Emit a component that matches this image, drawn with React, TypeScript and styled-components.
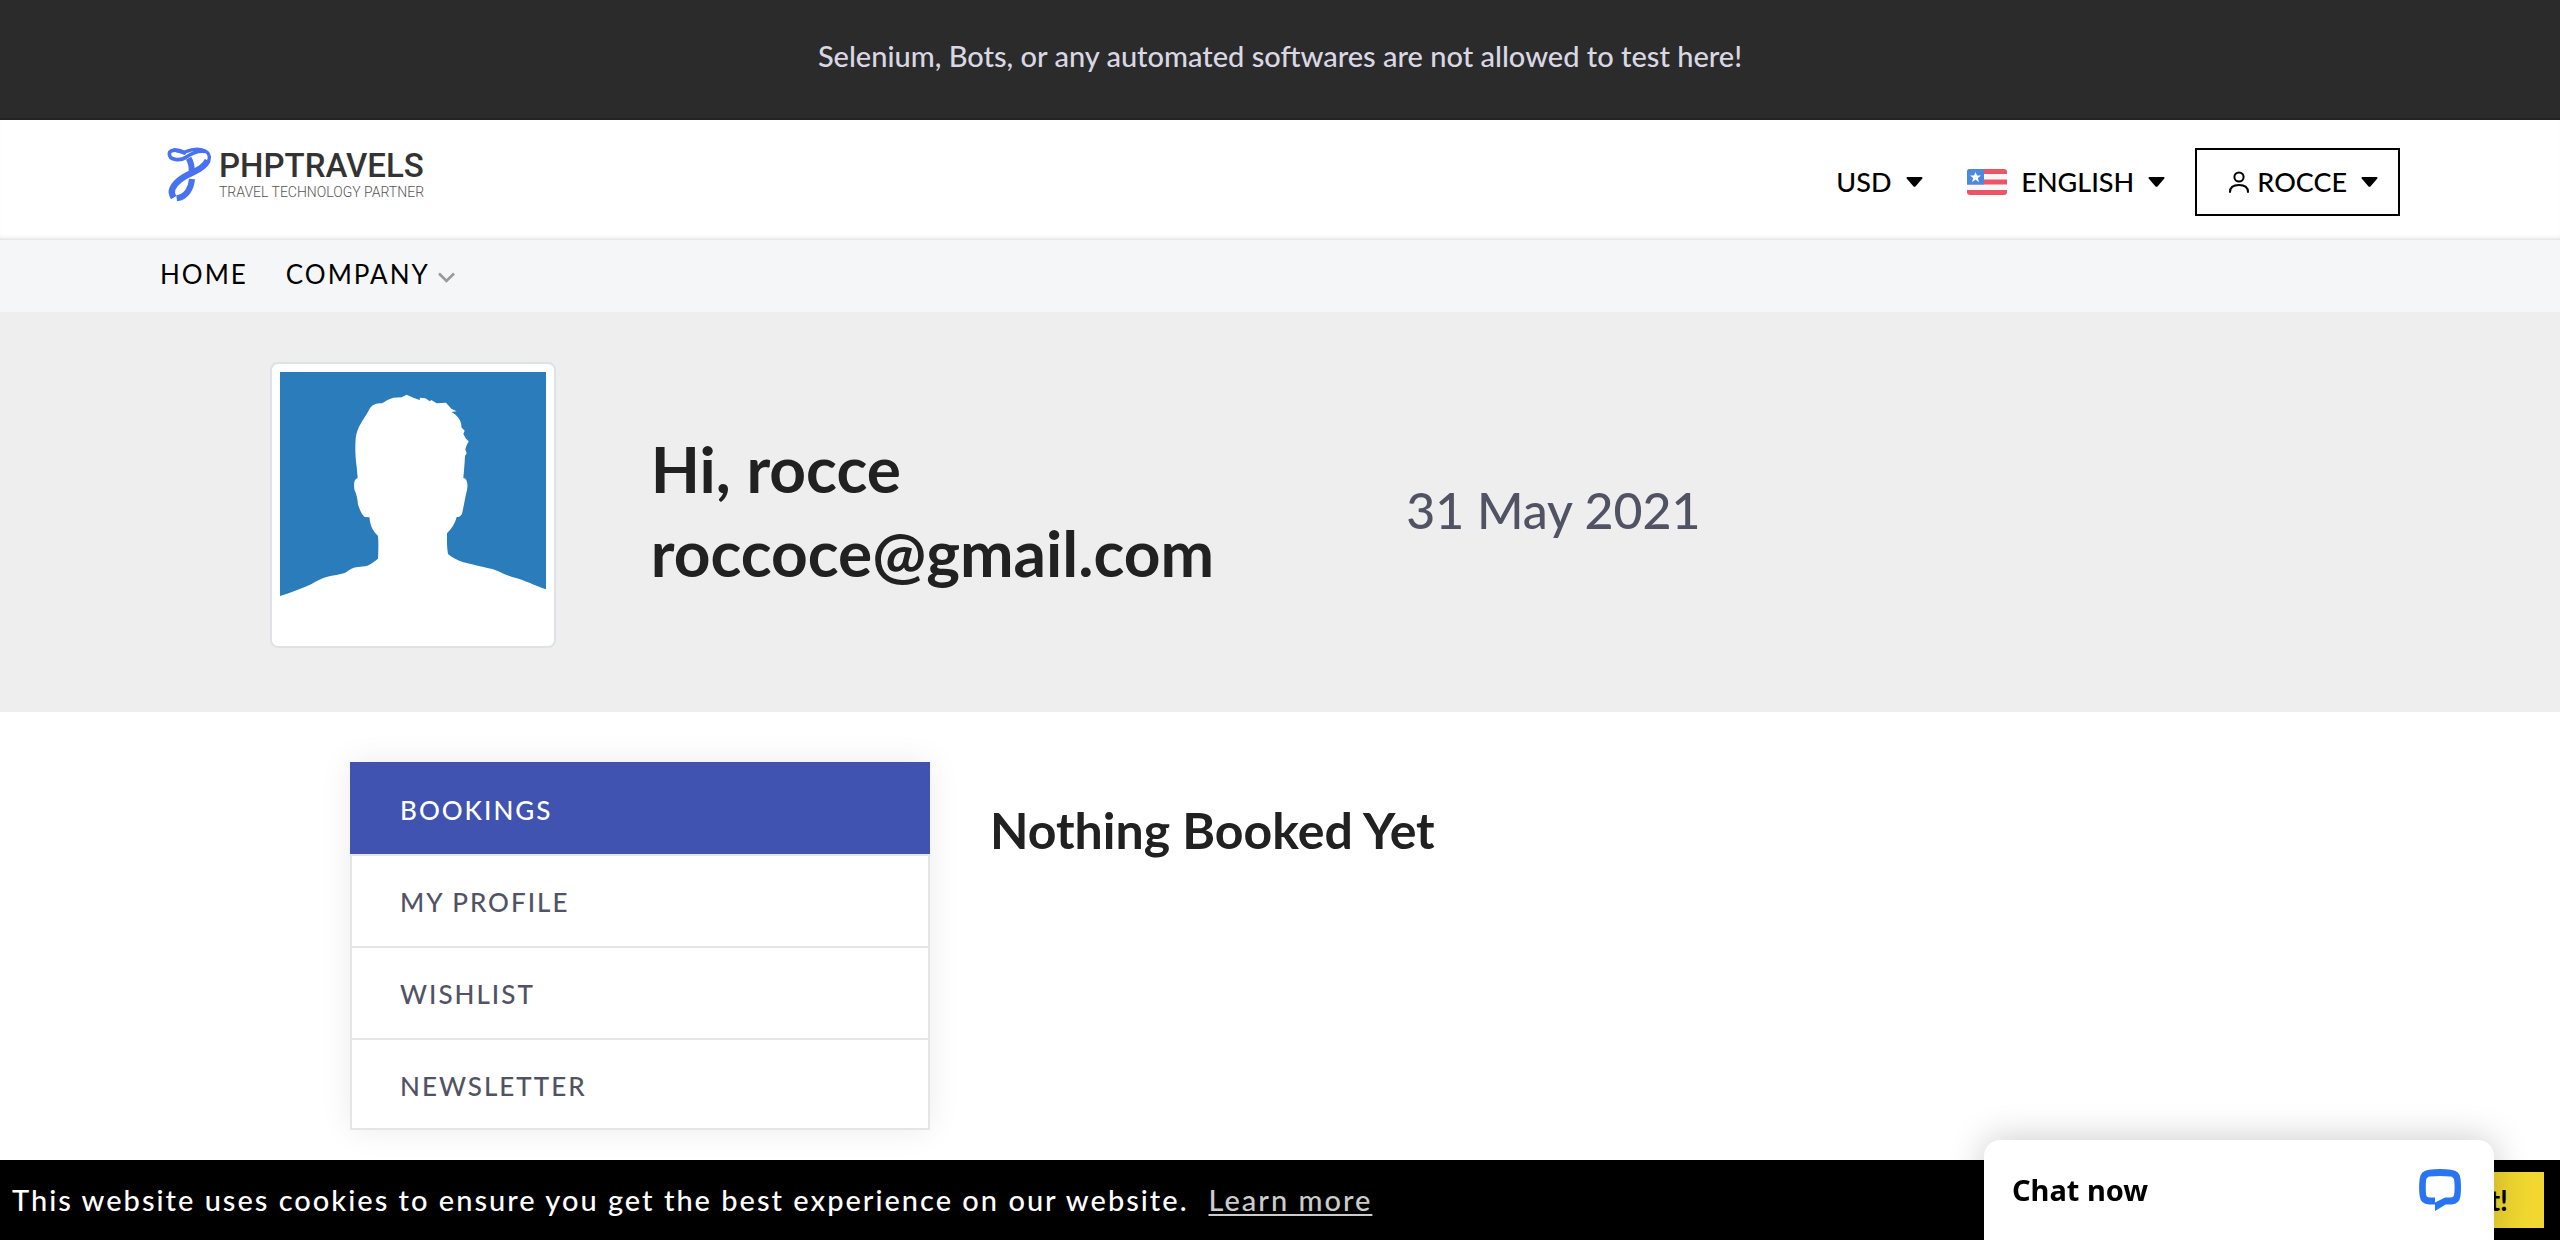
import React from 'react';
import styled, { createGlobalStyle } from 'styled-components';

const GlobalStyle = createGlobalStyle`
  *, *::before, *::after { box-sizing: border-box; }
  body {
    margin: 0;
    background: #fff;
    color: #515365;
    font-family: Lato, 'Noto Sans', sans-serif;
    font-size: 26px;
    line-height: 40px;
  }
  h1, h2, p, ul { margin: 0; padding: 0; font-size: inherit; font-weight: inherit; }
  ul { list-style: none; }
  a { color: inherit; text-decoration: none; }
  button, select { font: inherit; color: inherit; border: 0; background: none; padding: 0; cursor: pointer; }
`;

const Announcement = styled.p`
  height: 120px;
  padding: 36px 160px 0;
  background: #2b2b2b;
  border-bottom: 2px solid #242424;
  color: #d9d7e4;
  font-size: 29px;
  font-weight: 500;
  text-align: center;
`;

const Header = styled.header`
  display: flex;
  align-items: center;
  justify-content: space-between;
  min-height: 120px;
  padding: 0 160px;
  background: #fff;
  box-shadow: inset 0 -4px 4px -3px rgba(0, 0, 0, 0.16);
`;

const Brand = styled.a`
  display: flex;
  align-items: center;
  gap: 7px;
  padding: 0 0 12px 7px;
  svg { display: block; width: 45px; height: 55px; }
`;

const BrandText = styled.span`
  display: flex;
  flex-direction: column;
`;

const BrandName = styled.span`
  color: #333;
  font: 500 33px/36px Roboto, sans-serif;
`;

const BrandTagline = styled.span`
  color: #555;
  font: 300 14px/16px Roboto, sans-serif;
`;

const Tools = styled.div`
  display: flex;
  align-items: center;
  padding-top: 4px;
  color: #000;
  font-size: 27px;
  font-weight: 500;
`;

const Picker = styled.label`
  display: flex;
  align-items: center;
  gap: 14px;
  margin-right: ${(p: { $end: number }) => p.$end}px;
  select { appearance: none; outline: 0; }
`;

const UserButton = styled.button`
  display: flex;
  align-items: center;
  height: 68px;
  padding: 0 20px 0 32px;
  border: 2px solid #000;
  span { margin: 0 14px 0 8px; }
`;

const NavBar = styled.nav`
  display: flex;
  align-items: center;
  gap: 38px;
  height: 72px;
  padding: 0 160px 4px;
  background: #f5f6f8;
  color: #000;
  letter-spacing: 2px;
  a { display: flex; align-items: center; gap: 8px; }
  svg { margin-top: 6px; }
`;

const Hero = styled.section`
  display: grid;
  grid-template-columns: 3fr 6fr 7fr;
  min-height: 400px;
  padding: 50px 270px 64px;
  background: #eee;
`;

const AvatarFrame = styled.div`
  width: 286px;
  height: 286px;
  padding: 8px;
  background: #fff;
  border: 2px solid #dee2e6;
  border-radius: 8px;
  svg { display: block; width: 266px; height: 266px; }
`;

const Greeting = styled.h1`
  align-self: center;
  padding: 12px 0 0 2px;
  color: #212121;
  font-size: 64px;
  font-weight: 700;
  line-height: 84px;
`;

const Today = styled.p`
  align-self: center;
  padding-top: 10px;
  font-size: 50px;
  font-weight: 500;
  line-height: 60px;
`;

const Account = styled.main`
  display: grid;
  grid-template-columns: 29fr 61fr;
  gap: 60px;
  align-items: start;
  padding: 50px 350px 110px;
`;

const Menu = styled.ul`
  border: 2px solid #e5e5e5;
  border-top: 0;
  box-shadow: 0 0 30px rgba(0, 0, 0, 0.08);
  background: #fff;
`;

const MenuItem = styled.li`
  height: 92px;
  border-top: 2px solid #e5e5e5;
  font-weight: 500;
  letter-spacing: 2px;
  a { display: block; height: 100%; padding: 26px 48px; }
  &:last-child { height: 90px; }
  ${(p: { $active: boolean }) => p.$active && `
    margin: 0 -2px;
    border-top-color: #4053b1;
    background: #4053b1;
    color: #fff;
    a { padding-left: 50px; }
  `}
`;

const EmptyTitle = styled.h2`
  padding-top: 38px;
  color: #212121;
  font-size: 50px;
  font-weight: 700;
  line-height: 60px;
`;

const CookieBar = styled.aside`
  position: fixed;
  inset: auto 0 0;
  display: flex;
  align-items: center;
  justify-content: space-between;
  height: 80px;
  padding: 0 16px 0 12px;
  background: #000;
  color: #fff;
  font-size: 29px;
  font-weight: 500;
  letter-spacing: 2px;
  a { margin-left: 20px; color: #ccc; text-decoration: underline; text-decoration-thickness: 2px; text-underline-offset: 3px; }
`;

const AcceptButton = styled.button`
  height: 56px;
  padding: 0 36px;
  background: #f1d730;
  color: #000;
  font-size: 28px;
  font-weight: 700;
  letter-spacing: 0;
`;

const ChatButton = styled.button`
  position: fixed;
  right: 66px;
  bottom: 0;
  display: flex;
  align-items: center;
  justify-content: space-between;
  width: 510px;
  height: 100px;
  padding: 0 33px 0 28px;
  border-radius: 16px 16px 0 0;
  background: #fff;
  box-shadow: 0 0 36px rgba(0, 0, 0, 0.22);
  color: #000;
  font: 700 29px/40px 'Noto Sans', sans-serif;
`;

const Caret = () => (
  <svg width="17" height="10" viewBox="0 0 17 10" aria-hidden="true">
    <path d="M1.500 0h14q1.500 0 .8 1.500L9.700 9.300q-1.200 1.100-2.400 0L.7 1.500Q0 0 1.500 0z" />
  </svg>
);

const BrandMark = () => (
  <svg viewBox="80 80 135 165" fill="none" stroke="#4872f0" strokeLinecap="round" aria-hidden="true">
    <path d="M132 98C116 86 88 86 87 100c-1 20 32 22 50 11 18-13 40-19 54-18" strokeWidth="11" />
    <path d="M102 89c14 2 20 10 34 5 32-13 68-8 71 15 2 18-14 30-34 42" strokeWidth="10" />
    <path d="M202 120c-8 16-26 28-44 36-30 13-54 28-62 50-4 10-1 18 4 26" strokeWidth="19" strokeLinecap="butt" />
    <path d="M145 114c8 14 10 24 9 40" strokeWidth="18" strokeLinecap="butt" />
    <path d="M155 176c-2 26-16 54-46 58" strokeWidth="18" strokeLinecap="butt" />
  </svg>
);

const Flag = () => (
  <svg width="40" height="26" viewBox="0 0 40 26" aria-hidden="true">
    <clipPath id="flag-edge"><rect width="40" height="26" rx="3" /></clipPath>
    <g clipPath="url(#flag-edge)">
      <path fill="#f6f7f9" d="M0 0h40v26H0z" />
      <path fill="#ec5565" d="M0 0h40v5H0zM0 10.500h40v5H0zM0 21h40v5H0z" />
      <path fill="#4a89dc" d="M0 0h17v15.500H0z" />
      <path fill="#fff" d="m8.500 3 1.500 3.500h4l-3.200 2.600 1.200 4-3.500-2.300L5 13.100l1.200-4L3 6.500h4z" />
    </g>
  </svg>
);

const UserIcon = () => (
  <svg width="20" height="22" viewBox="0 0 20 22" fill="none" stroke="#000" strokeWidth="2" strokeLinecap="round" aria-hidden="true">
    <circle cx="10" cy="6" r="4.600" />
    <path d="M1 21c0-5 3.500-7 9-7s9 2 9 7" />
  </svg>
);

const Chevron = () => (
  <svg width="17" height="11" viewBox="0 0 17 11" fill="none" stroke="#999" strokeWidth="2.600" aria-hidden="true">
    <path d="m1 1.500 7.500 7.500L16 1.500" />
  </svg>
);

const Silhouette = () => (
  <svg viewBox="90 96 798 798" role="img" aria-label="Profile photo">
    <path fill="#2b7cbb" d="M90 96h798v652C850 734 825 721 795 713C760 704 735 686 712 684C680 676 660 672 640 667C620 660 606 652 594 642C590 620 591 600 591 580C606 566 616 548 620 531C630 532 637 524 638 512C643 490 646 470 651 450C655 430 650 414 640 414C642 390 644 370 645 348L650 340L646 328L650 316L656 304L648 296L640 282L644 272L634 262C636 246 624 226 604 216L620 214L604 206L588 188L560 190L544 180L540 184L526 175L510 173L509 180L490 173L470 164L455 172L430 173C415 177 405 184 396 190C376 188 362 196 355 214C340 240 322 260 317 295C315 325 316 350 320 380L323 414C312 418 311 430 313 448C320 465 323 478 324 494C330 510 336 526 344 531L358 532C362 560 366 570 384 588C386 610 385 635 384 656C368 668 358 677 344 679L318 682C300 684 292 700 272 702C255 706 235 709 220 714C200 722 190 730 170 739C145 749 120 760 90 768z" />
  </svg>
);

const ChatIcon = () => (
  <svg width="42" height="42" viewBox="0 0 42 42" aria-hidden="true">
    <path fill="#2974f1" fillRule="evenodd" d="M10 .7Q21-.6 32 .7q9 1 9.500 9Q42.500 18 41.500 27q-1 8-9 8.500h-6L16 42v-6.500h-6Q1.500 35 .7 27-.5 18 .7 9.700 1.500 1.700 10 .7zM11 7.500q-3.500.3-4 4Q6.500 18 7 25q.3 3.500 3.500 3.500H16v5l10-5h5.500q3.500 0 3.700-3.500.8-7 0-13.500-.5-3.700-4-4Q21 6.700 11 7.500z" />
  </svg>
);

const accountLinks = ['BOOKINGS', 'MY PROFILE', 'WISHLIST', 'NEWSLETTER'];

export default function App() {
  return (
    <>
      <GlobalStyle />
      <Announcement>Selenium, Bots, or any automated softwares are not allowed to test here!</Announcement>
      <Header>
        <Brand href="#home">
          <BrandMark />
          <BrandText>
            <BrandName>PHPTRAVELS</BrandName>
            <BrandTagline>TRAVEL TECHNOLOGY PARTNER</BrandTagline>
          </BrandText>
        </Brand>
        <Tools>
          <Picker $end={44}>
            <select aria-label="Currency"><option>USD</option></select>
            <Caret />
          </Picker>
          <Picker $end={30}>
            <Flag />
            <select aria-label="Language"><option>ENGLISH</option></select>
            <Caret />
          </Picker>
          <UserButton type="button">
            <UserIcon />
            <span>ROCCE</span>
            <Caret />
          </UserButton>
        </Tools>
      </Header>
      <NavBar>
        <a href="#home">HOME</a>
        <a href="#company">COMPANY <Chevron /></a>
      </NavBar>
      <Hero>
        <AvatarFrame><Silhouette /></AvatarFrame>
        <Greeting>Hi, rocce<br />roccoce@gmail.com</Greeting>
        <Today>31 May 2021</Today>
      </Hero>
      <Account>
        <Menu>
          {accountLinks.map((label, i) => (
            <MenuItem key={label} $active={i === 0}>
              <a href={`#${label.toLowerCase().replace(' ', '-')}`}>{label}</a>
            </MenuItem>
          ))}
        </Menu>
        <EmptyTitle>Nothing Booked Yet</EmptyTitle>
      </Account>
      <CookieBar>
        <p>
          This website uses cookies to ensure you get the best experience on our website.
          <a href="#cookies">Learn more</a>
        </p>
        <AcceptButton type="button">Got it!</AcceptButton>
      </CookieBar>
      <ChatButton type="button">Chat now <ChatIcon /></ChatButton>
    </>
  );
}
